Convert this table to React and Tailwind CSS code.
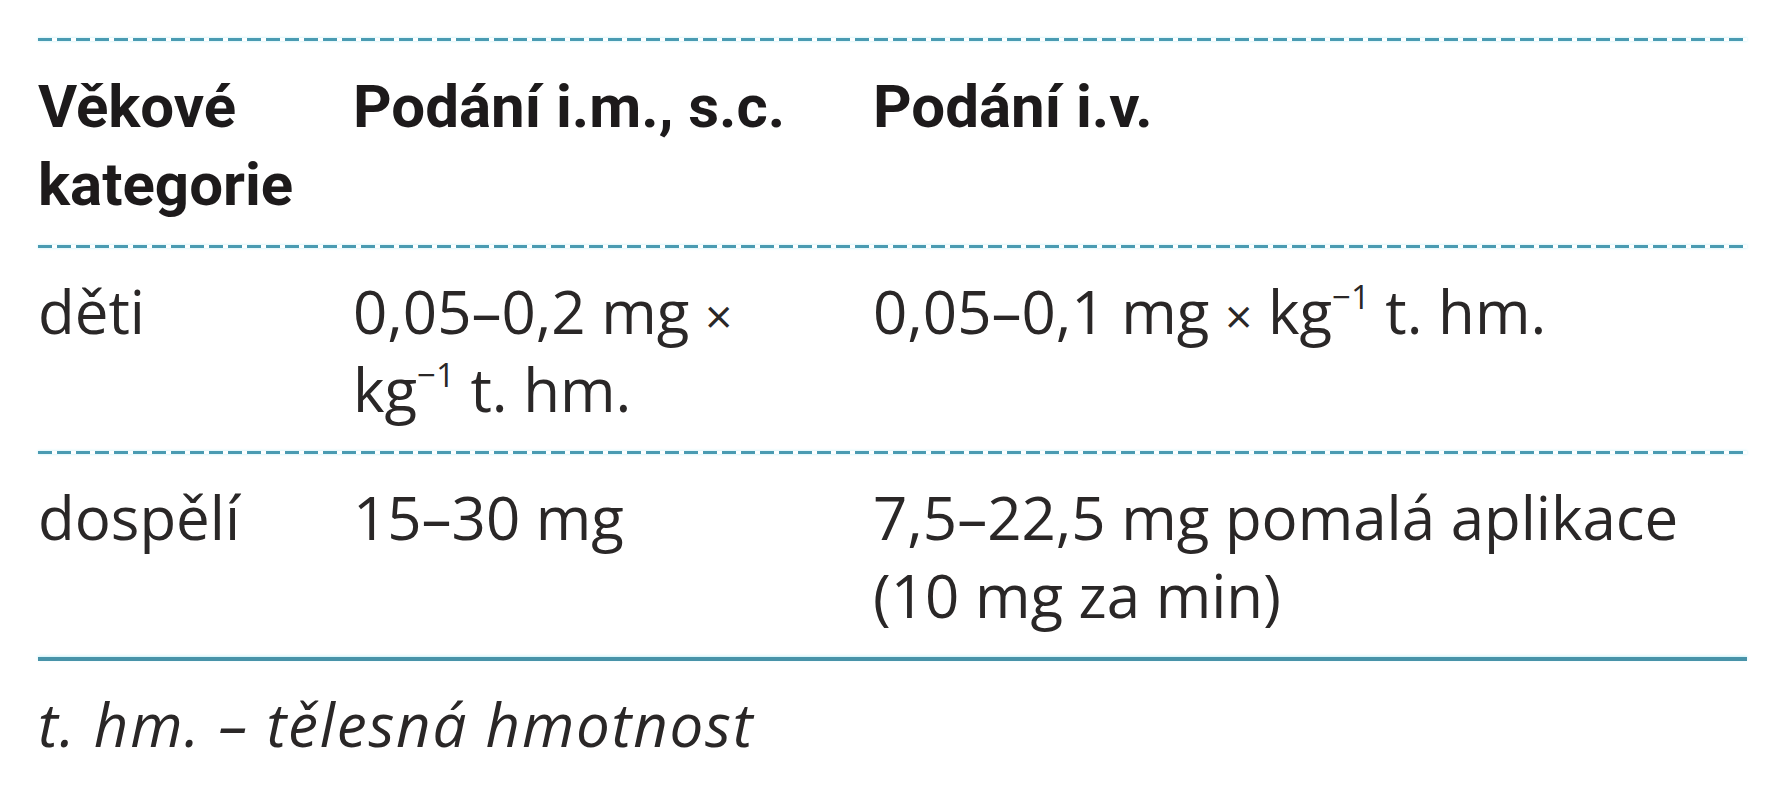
export default function App() {
  // dashed rule used between table rows
  const Dashed = () => (
    <div className="h-[3px] w-full bg-[repeating-linear-gradient(to_right,#4a9bb2_0_14px,transparent_14px_19px)] shadow-[0_0_3px_#bfeef7]" />
  );

  const rows = [
    {
      age: "děti",
      im: (
        <>
          0,05–0,2 mg <span className="text-[0.8em] leading-none">×</span>
          <br />
          kg<sup className="text-[0.55em] leading-none -top-[0.75em]">−1</sup> t. hm.
        </>
      ),
      iv: (
        <>
          0,05–0,1 mg <span className="text-[0.8em] leading-none">×</span> kg
          <sup className="text-[0.55em] leading-none -top-[0.75em]">−1</sup> t. hm.
        </>
      ),
    },
    {
      age: "dospělí",
      im: "15–30 mg",
      iv: (
        <>
          7,5–22,5 mg pomalá aplikace
          <br />
          (10 mg za min)
        </>
      ),
    },
  ];

  return (
    <div className="min-h-[800px] bg-white pl-[38px] pr-[26px] pt-[38px] font-['Open_Sans',sans-serif] text-[60px] leading-[78px] text-[#2a2727]">
      <Dashed />

      {/* header */}
      <div className="grid grid-cols-[315px_520px_1fr] pt-[27px] pb-[21px] font-['Roboto',sans-serif] font-bold text-[#1d1a1b]">
        <div>
          Věkové
          <br />
          kategorie
        </div>
        <div>Podání i.m., s.c.</div>
        <div>Podání i.v.</div>
      </div>

      {rows.map((r, i) => (
        <div key={i}>
          <Dashed />
          <div className="grid grid-cols-[315px_520px_1fr] pt-6 pb-[23px]">
            <div>{r.age}</div>
            <div>{r.im}</div>
            <div>{r.iv}</div>
          </div>
        </div>
      ))}

      <div className="h-[4px] w-full bg-[#4893a9] shadow-[0_-1px_3px_#c8f1f8]" />

      <p className="pt-6 italic tracking-[0.03em]">t. hm. – tělesná hmotnost</p>
    </div>
  );
}
